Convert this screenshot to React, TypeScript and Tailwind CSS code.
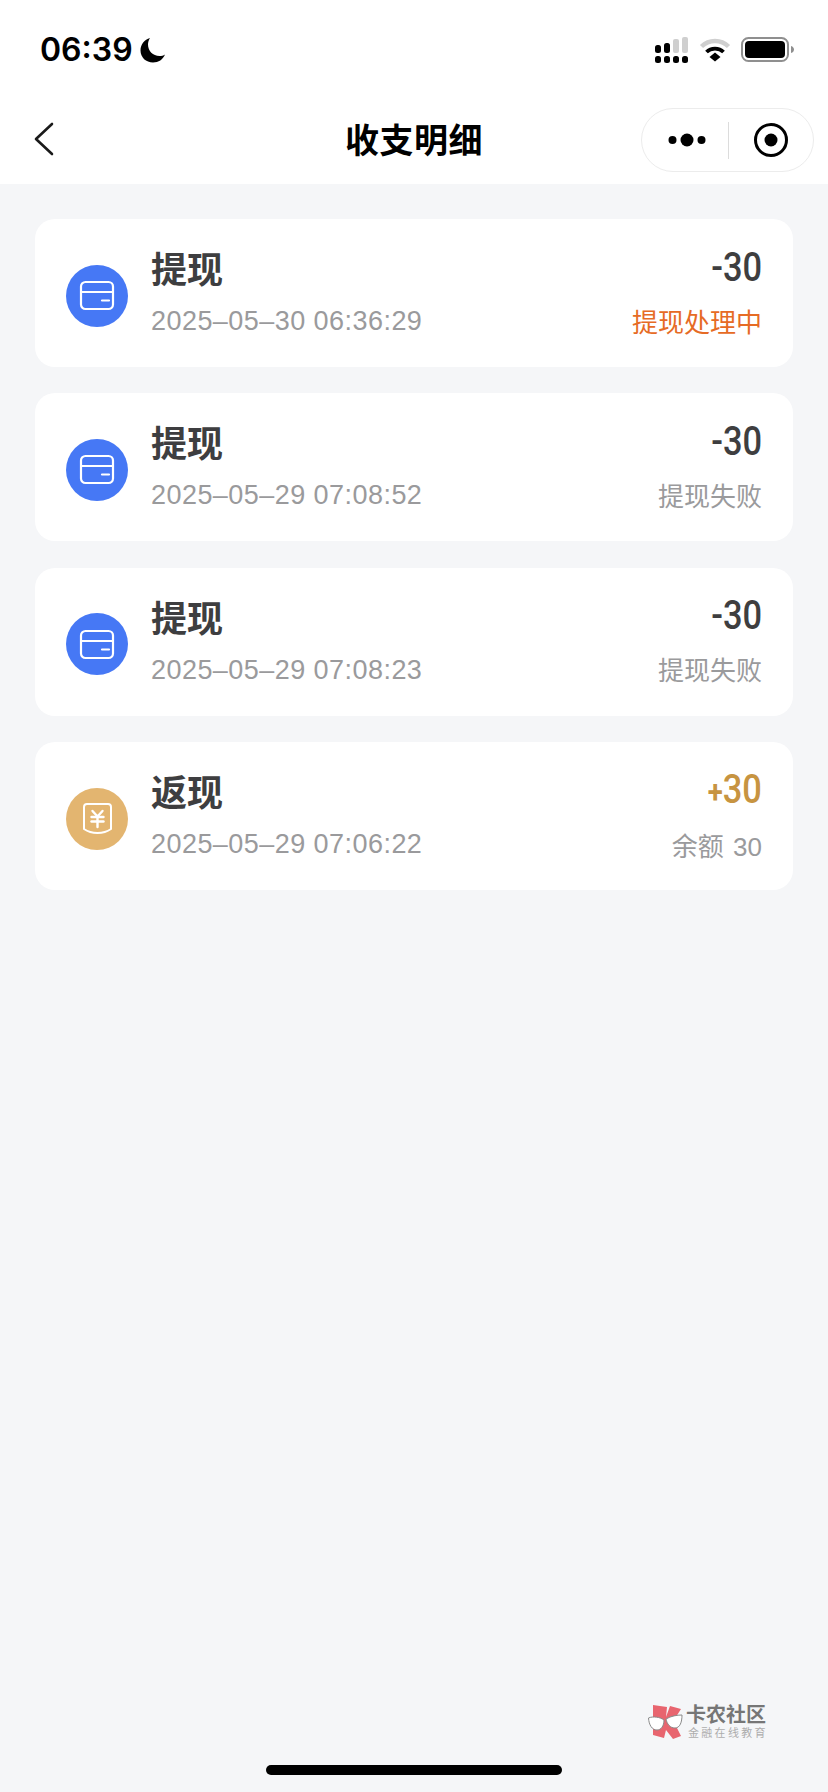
const records = [
  { title: "提现", time: "2025–05–30 06:36:29", sign: "-", amount: "30", note: "提现处理中", noteColor: "text-[#e66b25]", kind: "card" },
  { title: "提现", time: "2025–05–29 07:08:52", sign: "-", amount: "30", note: "提现失败", noteColor: "text-[#9a9a9c]", kind: "card" },
  { title: "提现", time: "2025–05–29 07:08:23", sign: "-", amount: "30", note: "提现失败", noteColor: "text-[#9a9a9c]", kind: "card" },
  { title: "返现", time: "2025–05–29 07:06:22", sign: "+", amount: "30", note: "余额 30", noteColor: "text-[#9a9a9c]", kind: "cash" },
];

function StatusIcons() {
  return (
    <div className="flex items-start">
      {/* signal */}
      <svg width="33" height="27" viewBox="0 0 33 27" className="mt-[37px]">
        <rect x="0" y="8" width="6" height="8" rx="2.5" fill="#000" />
        <rect x="9" y="6" width="6" height="10" rx="2.5" fill="#000" />
        <rect x="18" y="2" width="6" height="14" rx="2" fill="#cfcfcf" />
        <rect x="27" y="0" width="6" height="16" rx="2" fill="#cfcfcf" />
        <rect x="0" y="19" width="6" height="7" rx="2.5" fill="#000" />
        <rect x="9" y="19" width="6" height="7" rx="2.5" fill="#000" />
        <rect x="18" y="19" width="6" height="7" rx="2.5" fill="#000" />
        <rect x="27" y="19" width="6" height="7" rx="2.5" fill="#000" />
      </svg>
      {/* wifi */}
      <svg width="32" height="25" viewBox="0 0 32 25" className="mt-[37px] ml-[11px]">
        <path d="M2.5 9.5C10 2 22 2 29.500 9.500" fill="none" stroke="#cfcfcf" strokeWidth="4.500" />
        <path d="M7.500 15C12 10.500 20 10.500 24.500 15" fill="none" stroke="#000" strokeWidth="3.800" />
        <path d="M10.500 20L16 15.500L21.500 20L16 24.500Z" fill="#000" />
      </svg>
      {/* battery */}
      <svg width="54" height="26" viewBox="0 0 54 26" className="mt-[37px] ml-[10px]">
        <rect x="1" y="1" width="46" height="23" rx="6.500" fill="none" stroke="#8f8f8f" strokeWidth="2" />
        <rect x="4" y="4" width="40" height="17" rx="4" fill="#000" />
        <path d="M50 9c2 .5 3 2 3 3.500s-1 3-3 3.500z" fill="#8f8f8f" />
      </svg>
    </div>
  );
}

function CardIcon() {
  return (
    <div className="mt-[5px] flex h-[62px] w-[62px] shrink-0 items-center justify-center rounded-full bg-[#4678f5]">
      <svg width="36" height="31" viewBox="0 0 36 31" fill="none" stroke="#fff" strokeWidth="2.200" strokeLinecap="round">
        <rect x="2" y="2" width="32" height="27" rx="4.500" />
        <path d="M2 12H34" />
        <path d="M23 20.500H30" />
      </svg>
    </div>
  );
}

function CashIcon() {
  return (
    <div className="mt-[5px] flex h-[62px] w-[62px] shrink-0 items-center justify-center rounded-full bg-[#e3b570]">
      <svg width="31" height="33" viewBox="0 0 31 33" fill="none" stroke="#fff" strokeWidth="2" strokeLinecap="round" strokeLinejoin="round">
        <path d="M5 2H26C27.700 2 29 3.300 29 5V27C24 30.500 20 31 15.500 31C11 31 7 30.500 2 27V5C2 3.300 3.300 2 5 2Z" />
        <path d="M10.500 9L15.500 14.500L20.500 9" strokeWidth="2.400" />
        <path d="M9.500 15H21.500" strokeWidth="2.400" />
        <path d="M9.500 19.500H21.500" strokeWidth="2.400" />
        <path d="M15.500 14.500V25" strokeWidth="2.400" />
      </svg>
    </div>
  );
}

function Logo() {
  return (
    <div className="absolute left-[648px] top-[1704px] flex items-start">
      <svg width="35" height="36" viewBox="0 0 35 36">
        <path d="M5 1L19 3L18 13L22 2L33 5L26 16L20 19L28 22L33 32L25 35L18 26L16 34L5 31Z" fill="#e8656f" />
        <path d="M0.500 14C5 12 12 13 16 16C16 22 13 26 9 26C4 26 1 21 0.500 14Z" fill="#fff" stroke="#8a8a8a" strokeWidth="1" />
        <path d="M18 15C23 12 29 11 34 11C34 18 32 24 27 24C22 24 19 20 18 15Z" fill="#fff" stroke="#8a8a8a" strokeWidth="1" />
      </svg>
      <div className="ml-[3px] flex flex-col">
        <span className="text-[20px] leading-[23px] font-bold text-[#767676]">卡农社区</span>
        <span className="ml-[2px] text-[11px] leading-[13px] tracking-[2.300px] text-[#adadad]">金融在线教育</span>
      </div>
    </div>
  );
}

function RecordCard({ record }: { record: (typeof records)[number] }) {
  const isCash = record.kind === "cash";
  return (
    <div className="flex h-[148px] items-center rounded-[20px] bg-white pr-[31px] pl-[31px]">
      {isCash ? <CashIcon /> : <CardIcon />}
      <div className="ml-[23px] flex flex-1 flex-col pt-[2px]">
        <span className="text-[36px] leading-[44px] font-semibold text-[#3e3e40]">{record.title}</span>
        <span className="mt-[10px] text-[27px] leading-[36px] tracking-[0.450px] text-[#9a9a9c]">{record.time}</span>
      </div>
      <div className="flex flex-col items-end">
        <span className={`origin-right scale-x-[0.86] [font-family:Roboto,sans-serif] text-[40px] leading-[44px] font-medium ${isCash ? "text-[#c79441]" : "text-[#3e3e40]"}`}>
          <span className={isCash ? "text-[32px] font-bold" : ""}>{record.sign}</span>
          {record.amount}
        </span>
        <span className={`mt-[15px] text-[26px] leading-[36px] [word-spacing:2px] ${record.noteColor}`}>{record.note}</span>
      </div>
    </div>
  );
}

export default function App() {
  return (
    <div className="relative flex h-[1792px] w-[828px] flex-col overflow-hidden bg-[#f5f6f8] [font-family:'Liberation_Sans','Noto_Sans_CJK_SC',sans-serif]">
      <header className="h-[184px] shrink-0 bg-white">
        <div className="flex h-[96px] justify-between pr-[33px] pl-[40px]">
          <div className="flex items-start pt-[31px]">
            <span className="[font-family:Inter,sans-serif] text-[32px] leading-[38px] font-semibold text-black">06:39</span>
            <svg width="26" height="26" viewBox="0 0 26 26" className="mt-[6px] ml-[7px]">
              <path d="M10 1C4.500 2.500 .5 7.500 .5 13.500C.5 20.500 6 25.500 13 25.500C18.500 25.500 23 22.500 25 17.500C23.500 18.500 21.500 19 19.500 19C13 19 8 14 8 7.500C8 5.500 8.700 3 10 1Z" fill="#000" />
            </svg>
          </div>
          <StatusIcons />
        </div>
        <nav className="relative flex h-[88px] items-center justify-center">
          <svg width="22" height="36" viewBox="0 0 22 36" className="absolute top-[25px] left-[33px]" fill="none" stroke="#1a1a1a" strokeWidth="2.600" strokeLinecap="round" strokeLinejoin="round">
            <path d="M19 3L3 18L19 33" />
          </svg>
          <h1 className="pt-[2px] text-[34px] leading-[44px] font-semibold tracking-[0.500px] text-black">收支明细</h1>
          <div className="absolute top-[12px] right-[14px] flex h-[64px] w-[173px] items-center rounded-full border border-[#ececec] bg-white">
            <div className="flex w-[86px] items-center justify-center pl-[3px]">
              <svg width="38" height="14" viewBox="0 0 38 14" fill="#000">
                <circle cx="4.500" cy="7" r="4" />
                <circle cx="19" cy="7" r="6.500" />
                <circle cx="33.500" cy="7" r="4" />
              </svg>
            </div>
            <div className="h-[37px] w-px bg-[#dcdcdc]" />
            <div className="flex flex-1 items-center justify-center">
              <svg width="36" height="36" viewBox="0 0 36 36">
                <circle cx="18" cy="18" r="15.500" fill="none" stroke="#000" strokeWidth="3" />
                <circle cx="18" cy="18" r="6.500" fill="#000" />
              </svg>
            </div>
          </div>
        </nav>
      </header>

      <main className="flex flex-col gap-[26.400px] px-[35px] pt-[35px]">
        {records.map((r, i) => (
          <RecordCard key={i} record={r} />
        ))}
      </main>

      <Logo />
      {/* home indicator */}
      <div className="absolute top-[1765px] left-[266px] h-[10px] w-[296px] rounded-full bg-black" />
    </div>
  );
}
